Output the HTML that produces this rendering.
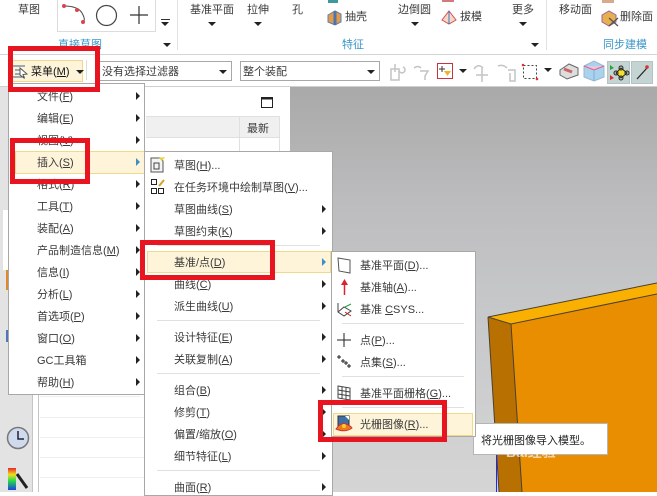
<!DOCTYPE html>
<html><head><meta charset="utf-8">
<style>
html,body{margin:0;padding:0}
body{width:657px;height:492px;position:relative;overflow:hidden;background:#fff;font-family:"Liberation Sans","Noto Sans CJK SC",sans-serif;font-size:11px;color:#3a3a3a}
.a{position:absolute}
.t{position:absolute;white-space:nowrap;line-height:14px;margin-top:1px}
.arr{position:absolute;width:0;height:0;border-left:4px solid #222;border-top:4px solid transparent;border-bottom:4px solid transparent}
.dn{position:absolute;width:0;height:0;border-top:4px solid #222;border-left:4px solid transparent;border-right:4px solid transparent}
.sep{position:absolute;height:1px;background:#e0e0e0}
.menu{position:absolute;background:#fff;border:1px solid #a8a8a8;box-sizing:border-box}
.hl{position:absolute;background:#fdf4d9;border:1px solid #f1d98a;box-sizing:border-box}
.red{position:absolute;border:5px solid #e8141f;box-sizing:border-box}
.blue{color:#3a96c8}
u{text-decoration:underline}
</style></head><body>
<!-- ribbon -->
<div class="a" style="left:0;top:0;width:657px;height:55px;background:#fff;border-bottom:1px solid #d5d5d5;box-sizing:border-box"></div>
<div class="t" style="left:18px;top:2px">草图</div>
<div class="a" style="left:57px;top:0;width:99px;height:32px;border:1px solid #dcdcdc;border-top:0;box-sizing:border-box"></div>
<svg class="a" style="left:57px;top:0" width="100" height="32"><path d="M7 6Q21 6 25 13T26 22" fill="none" stroke="#444"/><circle cx="7" cy="6" r="2" fill="#d9434e"/><circle cx="20" cy="10" r="2" fill="#d9434e"/><circle cx="26" cy="22" r="2" fill="#d9434e"/><circle cx="49.500" cy="15.500" r="10" fill="none" stroke="#444" stroke-width="1.200"/><path d="M82 6V24M73 15H91" stroke="#333" stroke-width="1.200" fill="none"/></svg>
<div class="a" style="left:161px;top:19px;width:9px;height:1px;background:#333"></div>
<div class="dn" style="left:161px;top:22px"></div>
<div class="dn" style="left:163px;top:43px"></div>
<div class="t blue" style="left:58px;top:37px">直接草图</div>
<div class="a" style="left:177px;top:0;width:1px;height:50px;background:#e2e2e2"></div>
<div class="t" style="left:190px;top:2px">基准平面</div>
<div class="dn" style="left:208px;top:22px"></div>
<div class="t" style="left:247px;top:2px">拉伸</div>
<div class="dn" style="left:254px;top:22px"></div>
<div class="t" style="left:292px;top:2px">孔</div>
<svg class="a" style="left:326px;top:10px" width="18" height="16"><path d="M2 5L9 1L15 4V12L9 15L2 12Z" fill="#e49a4a" stroke="#5b7fb0"/><path d="M9 1V15" stroke="#4d75ad" stroke-width="3"/></svg>
<div class="a" style="left:328px;top:0;width:10px;height:3px;background:#3b9a9a"></div>
<div class="t" style="left:345px;top:9px">抽壳</div>
<div class="t" style="left:398px;top:2px">边倒圆</div>
<div class="dn" style="left:411px;top:22px"></div>
<div class="a" style="left:442px;top:0;width:12px;height:2px;background:#d27a7a"></div>
<svg class="a" style="left:441px;top:10px" width="16" height="16"><path d="M8 1L15 10L8 14L1 10Z" fill="#f4d9c8" stroke="#d65050"/><path d="M8 1V14" stroke="#3a77c0"/></svg>
<div class="t" style="left:460px;top:9px">拔模</div>
<div class="t" style="left:512px;top:2px">更多</div>
<div class="dn" style="left:519px;top:22px"></div>
<div class="t blue" style="left:342px;top:37px">特征</div>
<div class="dn" style="left:531px;top:43px"></div>
<div class="a" style="left:546px;top:0;width:1px;height:50px;background:#e2e2e2"></div>
<div class="t" style="left:559px;top:2px">移动面</div>
<div class="a" style="left:602px;top:0;width:12px;height:3px;background:#d9a98a"></div>
<svg class="a" style="left:601px;top:10px" width="18" height="17"><path d="M1 5L8 1L15 5V12L8 16L1 12Z" fill="#e6b04e" stroke="#a060a0"/><path d="M8 8L17 16M17 8L8 16" stroke="#555" stroke-width="1.300"/></svg>
<div class="t" style="left:620px;top:9px">删除面</div>
<div class="t blue" style="left:603px;top:37px">同步建模</div>
<!-- toolbar -->
<div class="a" style="left:0;top:55px;width:657px;height:32px;background:#fff;border-bottom:1px solid #cfcfcf;box-sizing:border-box"></div>
<div class="a" style="left:8px;top:60px;width:75px;height:22px;background:#fdf4d9;border:1px solid #f0d98c;box-sizing:border-box"></div>
<div class="a" style="left:86px;top:60px;width:1px;height:20px;background:#ddd"></div>
<svg class="a" style="left:12px;top:63px" width="16" height="16"><path d="M1 3H13M3 7H11M3 11H11M1 14H13" stroke="#3c5f8f" fill="none"/><path d="M8 5L15 11L11 11.500L12 15L8 12Z" fill="#fff" stroke="#555"/></svg>
<div class="t" style="left:31px;top:64px;color:#111">菜单(<u>M</u>)</div>
<div class="dn" style="left:76px;top:70px"></div>
<div class="a" style="left:98px;top:61px;width:134px;height:20px;border:1px solid #a8a8a8;box-sizing:border-box"></div>
<div class="t" style="left:102px;top:64px">没有选择过滤器</div>
<div class="dn" style="left:219px;top:70px"></div>
<div class="a" style="left:240px;top:61px;width:140px;height:20px;border:1px solid #a8a8a8;box-sizing:border-box"></div>
<div class="t" style="left:243px;top:64px">整个装配</div>
<div class="dn" style="left:367px;top:70px"></div>
<svg class="a" style="left:388px;top:60px" width="170" height="24">
<g fill="none" stroke="#c4c4c4" stroke-width="1.500"><path d="M3 9H11V20H3ZM7 4V12M11 10a3 3 0 1 0 4 -3"/><path d="M26 8q4 -3 7 0M32 11h8l-3 5v4"/><path d="M86 9q4 -6 9 -1M94 8v14M88 15h12"/><path d="M110 6q5 -2 9 2M120 10h7v11h-5v-8"/></g>
<rect x="49.500" y="3.500" width="15" height="15" fill="#fff" stroke="#c8323f"/>
<path d="M54 6V12M51 9H57" stroke="#333"/><path d="M56 11H63L59.500 16Z" fill="#efb22f"/>
<path d="M71 9L79 9L75 13Z" fill="#222"/>
<rect x="135.500" y="5.500" width="13" height="13" fill="none" stroke="#444" stroke-dasharray="2 2"/><circle cx="135" cy="5" r="1.300" fill="#d33"/><circle cx="149" cy="19" r="1.300" fill="#d33"/>
</svg>
<div class="dn" style="left:544px;top:68px"></div>
<svg class="a" style="left:583px;top:59px" width="22" height="24"><path d="M1 7L11 2L21 7V18L11 22L1 18Z" fill="#a9d2ee" stroke="#9ab7cf"/><path d="M1 7L11 11L21 7" fill="#e4c8dc" stroke="#e25c8c"/><path d="M11 11V22" stroke="#7fb0d8"/></svg>
<svg class="a" style="left:558px;top:60px" width="22" height="22"><path d="M2 10L11 4L20 8V15L9 19L2 15Z" fill="#ddd" stroke="#666"/><path d="M6 9L14 12" stroke="#c66" stroke-width="3"/></svg>
<div class="a" style="left:607px;top:61px;width:23px;height:23px;background:#c3d4d2;border:1px solid #b3c4c2;box-sizing:border-box"></div>
<div class="a" style="left:631px;top:61px;width:22px;height:23px;background:#c3d4d2;border:1px solid #b3c4c2;box-sizing:border-box"></div>
<svg class="a" style="left:607px;top:61px" width="46" height="23"><path d="M14 7L20 12L14 17L9 12Z" fill="#f2e02a" stroke="#222"/><circle cx="14" cy="7" r="2" fill="none" stroke="#222"/><circle cx="20" cy="12" r="2" fill="none" stroke="#222"/><circle cx="14" cy="17" r="2" fill="none" stroke="#222"/><circle cx="9" cy="12" r="2" fill="none" stroke="#222"/><path d="M3 4L7 7L3 9Z" fill="#22a838"/><path d="M3 14L7 17L3 19Z" fill="#e0262e"/><path d="M30 18L40 7" stroke="#222" stroke-width="1.200"/><circle cx="40" cy="6" r="1.800" fill="#d33"/></svg>
<!-- left strip and panel -->
<div class="a" style="left:0;top:87px;width:32px;height:405px;background:#e3e3e3"></div>
<div class="a" style="left:3px;top:210px;width:5px;height:60px;background:#fff"></div>
<div class="a" style="left:6px;top:270px;width:2px;height:20px;background:#e0892c"></div>
<div class="a" style="left:6px;top:330px;width:2px;height:12px;background:#5277b5"></div>
<svg class="a" style="left:6px;top:426px" width="24" height="24"><circle cx="12" cy="12" r="10.500" fill="#cfdaee" stroke="#777" stroke-width="1.500"/><path d="M12 5V13H18" fill="none" stroke="#223" stroke-width="1.500"/></svg>
<svg class="a" style="left:7px;top:468px" width="22" height="24"><defs><linearGradient id="g" x1="0" y1="0" x2="0" y2="1"><stop offset="0" stop-color="#e8262a"/><stop offset=".3" stop-color="#f0e020"/><stop offset=".6" stop-color="#20d850"/><stop offset="1" stop-color="#2040e0"/></linearGradient></defs><rect x="1" y="0" width="8" height="22" fill="url(#g)"/><path d="M10 6L20 20" stroke="#222" stroke-width="3"/></svg>
<div class="a" style="left:32px;top:87px;width:7px;height:405px;background:#fff;border-left:1px solid #c4c4c4;border-right:1px solid #c4c4c4;box-sizing:border-box"></div>
<div class="a" style="left:39px;top:87px;width:251px;height:405px;background:#fff"></div>
<svg class="a" style="left:261px;top:97px" width="13" height="12"><rect x=".5" y=".5" width="11" height="10" fill="#fff" stroke="#222"/><path d="M0 1.500H12" stroke="#222" stroke-width="2"/></svg>
<div class="a" style="left:146px;top:116px;width:134px;height:22px;background:#f0f0f0;border-top:1px solid #e0e0e0;border-bottom:1px solid #e0e0e0;box-sizing:border-box"></div>
<div class="a" style="left:239px;top:116px;width:1px;height:36px;background:#e0e0e0"></div>
<div class="a" style="left:279px;top:116px;width:1px;height:36px;background:#e0e0e0"></div>
<div class="t" style="left:247px;top:121px">最新</div>
<div class="sep" style="left:40px;top:396px;width:100px;background:#efefef"></div>
<div class="sep" style="left:40px;top:417px;width:105px;background:#efefef"></div>
<div class="sep" style="left:40px;top:437px;width:105px;background:#efefef"></div>
<div class="sep" style="left:40px;top:457px;width:105px;background:#efefef"></div>
<div class="sep" style="left:40px;top:477px;width:105px;background:#efefef"></div>
<!-- viewport -->
<div class="a" style="left:290px;top:87px;width:367px;height:405px;background:linear-gradient(#a9a9a9 0,#bcbcbe 28%,#c5c6c8 50%,#d5d5d5 100%)"></div>
<svg class="a" style="left:470px;top:280px" width="187" height="212">
<path d="M41 44L187 14V212H52Z" fill="#e88e00"/>
<path d="M18 37L187 3V14L41 44Z" fill="#f9b000"/>
<path d="M18 37L41 44L52 212H29Z" fill="#b87000"/>
<path d="M187 3L18 37L41 44L187 14M18 37L29 212M41 44L52 212" fill="none" stroke="#4a4030" stroke-width="1"/>
</svg>
<!-- tooltip -->
<div class="a" style="left:473px;top:423px;width:135px;height:32px;background:#fff;border:1px solid #b5b5b5;box-sizing:border-box"></div>
<div class="t" style="left:481px;top:433px;color:#222">将光栅图像导入模型。</div>
<div class="t" style="left:506px;top:444px;color:rgba(255,255,255,.65);font-size:14px;font-weight:bold">Bai经验</div>
<div class="a" style="left:496px;top:455px;width:1px;height:37px;background:#1a2af0"></div>
<!-- menu 1 -->
<div class="menu" style="left:8px;top:83px;width:137px;height:312px"></div>
<div class="hl" style="left:15px;top:151px;width:130px;height:23px"></div>
<div class="t" style="left:37px;top:89px">文件(<u>F</u>)</div><div class="arr" style="left:136px;top:92px"></div>
<div class="t" style="left:37px;top:111px">编辑(<u>E</u>)</div><div class="arr" style="left:136px;top:114px"></div>
<div class="t" style="left:37px;top:133px">视图(<u>V</u>)</div><div class="arr" style="left:136px;top:136px"></div>
<div class="t" style="left:37px;top:155px">插入(<u>S</u>)</div><div class="arr" style="left:136px;top:158px;border-left-color:#3f8fc4"></div>
<div class="t" style="left:37px;top:177px">格式(<u>R</u>)</div><div class="arr" style="left:136px;top:180px"></div>
<div class="t" style="left:37px;top:199px">工具(<u>T</u>)</div><div class="arr" style="left:136px;top:202px"></div>
<div class="t" style="left:37px;top:221px">装配(<u>A</u>)</div><div class="arr" style="left:136px;top:224px"></div>
<div class="t" style="left:37px;top:243px">产品制造信息(<u>M</u>)</div><div class="arr" style="left:136px;top:246px"></div>
<div class="t" style="left:37px;top:265px">信息(<u>I</u>)</div><div class="arr" style="left:136px;top:268px"></div>
<div class="t" style="left:37px;top:287px">分析(<u>L</u>)</div><div class="arr" style="left:136px;top:290px"></div>
<div class="t" style="left:37px;top:309px">首选项(<u>P</u>)</div><div class="arr" style="left:136px;top:312px"></div>
<div class="t" style="left:37px;top:331px">窗口(<u>O</u>)</div><div class="arr" style="left:136px;top:334px"></div>
<div class="t" style="left:37px;top:353px">GC工具箱</div><div class="arr" style="left:136px;top:356px"></div>
<div class="t" style="left:37px;top:375px">帮助(<u>H</u>)</div><div class="arr" style="left:136px;top:378px"></div>
<!-- menu 2 -->
<div class="menu" style="left:144px;top:151px;width:189px;height:345px"></div>
<div class="hl" style="left:147px;top:251px;width:184px;height:22px"></div>
<svg class="a" style="left:150px;top:156px" width="16" height="18"><path d="M1 2H10L13 5V16H1Z" fill="#f4f4f4" stroke="#555"/><rect x="4" y="7" width="5" height="6" fill="none" stroke="#444"/><path d="M9 2l3 3 3-4z" fill="#e8d030"/></svg>
<svg class="a" style="left:150px;top:179px" width="16" height="16"><rect x="1.500" y=".5" width="5" height="5" fill="none" stroke="#222"/><rect x="1.500" y="9.500" width="5" height="5" fill="none" stroke="#222"/><rect x="8.500" y="9.500" width="5" height="5" fill="none" stroke="#222"/><path d="M9 7L14 1" stroke="#d8a020" stroke-width="2"/></svg>
<div class="t" style="left:174px;top:158px">草图(<u>H</u>)...</div>
<div class="t" style="left:174px;top:180px">在任务环境中绘制草图(<u>V</u>)...</div>
<div class="t" style="left:174px;top:202px">草图曲线(<u>S</u>)</div><div class="arr" style="left:322px;top:205px"></div>
<div class="t" style="left:174px;top:224px">草图约束(<u>K</u>)</div><div class="arr" style="left:322px;top:227px"></div>
<div class="sep" style="left:157px;top:245px;width:163px"></div>
<div class="t" style="left:174px;top:255px">基准/点(<u>D</u>)</div><div class="arr" style="left:322px;top:258px;border-left-color:#3f8fc4"></div>
<div class="t" style="left:174px;top:277px">曲线(<u>C</u>)</div><div class="arr" style="left:322px;top:280px"></div>
<div class="t" style="left:174px;top:299px">派生曲线(<u>U</u>)</div><div class="arr" style="left:322px;top:302px"></div>
<div class="sep" style="left:157px;top:320px;width:163px"></div>
<div class="t" style="left:174px;top:330px">设计特征(<u>E</u>)</div><div class="arr" style="left:322px;top:333px"></div>
<div class="t" style="left:174px;top:352px">关联复制(<u>A</u>)</div><div class="arr" style="left:322px;top:355px"></div>
<div class="sep" style="left:157px;top:373px;width:163px"></div>
<div class="t" style="left:174px;top:383px">组合(<u>B</u>)</div><div class="arr" style="left:322px;top:386px"></div>
<div class="t" style="left:174px;top:405px">修剪(<u>T</u>)</div><div class="arr" style="left:322px;top:408px"></div>
<div class="t" style="left:174px;top:427px">偏置/缩放(<u>O</u>)</div><div class="arr" style="left:322px;top:430px"></div>
<div class="t" style="left:174px;top:449px">细节特征(<u>L</u>)</div><div class="arr" style="left:322px;top:452px"></div>
<div class="sep" style="left:157px;top:470px;width:163px"></div>
<div class="t" style="left:174px;top:480px">曲面(<u>R</u>)</div><div class="arr" style="left:322px;top:483px"></div>
<!-- menu 3 -->
<div class="menu" style="left:331px;top:251px;width:145px;height:186px"></div>
<div class="hl" style="left:333px;top:413px;width:140px;height:23px"></div>
<svg class="a" style="left:336px;top:256px" width="16" height="18"><path d="M2 2L14 4V17L3 15Z" fill="#fff" stroke="#555"/></svg>
<svg class="a" style="left:340px;top:278px" width="10" height="18"><path d="M4.500 5V17" stroke="#d9232e" stroke-width="1.500"/><path d="M1 7L4.500 1L8 7Z" fill="#d9232e"/></svg>
<svg class="a" style="left:336px;top:301px" width="17" height="17"><path d="M2 2V11L8 15L15 10L8 6L2 11" fill="none" stroke="#444"/><path d="M9 6L15 3" stroke="#22a040"/><path d="M9 11L15 15" stroke="#c22"/></svg>
<svg class="a" style="left:336px;top:332px" width="16" height="16"><path d="M8 1V15M1 8H15" stroke="#222"/></svg>
<svg class="a" style="left:336px;top:354px" width="16" height="16"><path d="M3 1V5M1 3H5M7 5V9M5 7H9M10 7V11M8 9H12M13 10V14M11 12H15" stroke="#222"/></svg>
<svg class="a" style="left:337px;top:385px" width="15" height="16"><path d="M1 1L13 3V15L1 13ZM5 2V14M9 2.500V14.500M1 5L13 7M1 9L13 11" fill="none" stroke="#444"/></svg>
<svg class="a" style="left:335px;top:415px" width="18" height="18"><rect x="3" y="1" width="11" height="12" fill="#3f6fa8" stroke="#333"/><path d="M10 1L14 5V1Z" fill="#fff"/><path d="M1 14Q6 7 11 9T17 13Q10 18 1 14Z" fill="#ee7a1a" stroke="#c33"/><circle cx="9" cy="11" r="2" fill="#f2d030"/></svg>
<div class="t" style="left:360px;top:258px">基准平面(<u>D</u>)...</div>
<div class="t" style="left:360px;top:280px">基准轴(<u>A</u>)...</div>
<div class="t" style="left:360px;top:302px">基准 <u>C</u>SYS...</div>
<div class="sep" style="left:342px;top:323px;width:122px"></div>
<div class="t" style="left:360px;top:333px">点(<u>P</u>)...</div>
<div class="t" style="left:360px;top:355px">点集(<u>S</u>)...</div>
<div class="sep" style="left:342px;top:376px;width:122px"></div>
<div class="t" style="left:360px;top:386px">基准平面栅格(<u>G</u>)...</div>
<div class="sep" style="left:342px;top:407px;width:122px"></div>
<div class="t" style="left:360px;top:417px">光栅图像(<u>R</u>)...</div>
<!-- red boxes -->
<div class="red" style="left:8px;top:46px;width:92px;height:46px"></div>
<div class="red" style="left:10px;top:138px;width:80px;height:46px"></div>
<div class="red" style="left:140px;top:240px;width:135px;height:40px"></div>
<div class="red" style="left:318px;top:400px;width:129px;height:42px"></div>
</body></html>
